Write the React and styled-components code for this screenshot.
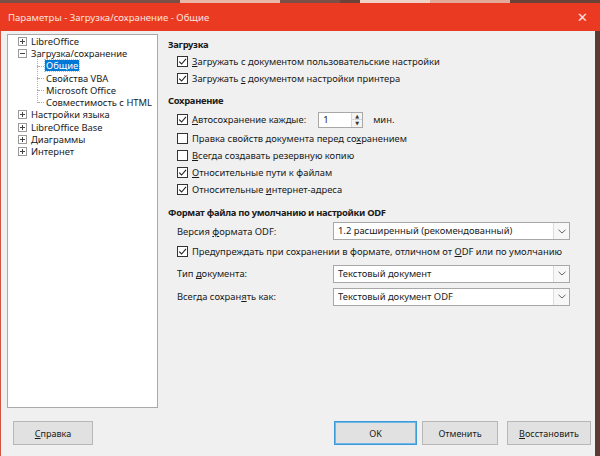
import React from "react";
import styled, { createGlobalStyle, css } from "styled-components";

const GlobalStyle = createGlobalStyle`
  html, body {
    margin: 0;
    padding: 0;
    background: #5b3b33;
  }
  body {
    font-family: "Noto Sans", "DejaVu Sans", sans-serif;
    font-size: 9.4px;
    color: #1a1a1a;
  }
`;

const Window = styled.div`
  display: flex;
  flex-flow: column;
  width: 600px;
  height: 456px;
  overflow: hidden;
`;

const TopStrip = styled.div`
  display: flex;
  height: 3px;
  background: #6a4238;

  span {
    display: block;
    height: 3px;
  }
  .a { width: 100px; background: #e8b7a8; }
  .b { width: 60px; background: #7a5046; }
  .c { width: 70px; background: #efd3c8; margin-left: 20px; }
  .d { width: 80px; background: #e3a999; }
`;

const TitleBar = styled.div`
  display: flex;
  align-items: center;
  justify-content: space-between;
  height: 28px;
  padding: 0 10px 0 8px;
  background: #ea3a22;
  color: #fde3dc;
  font-size: 9.6px;
`;

const Close = styled.span`
  font-size: 13px;
  color: #fde3dc;
  margin-right: 2px;
`;

const Body = styled.div`
  flex: 1;
  display: flex;
  flex-flow: column;
  background: #f0f0f0;
  border-left: 1px solid #d1553f;
  border-right: 5px solid #5b3b33;
`;

const Main = styled.div`
  display: flex;
  flex-flow: row;
  padding: 3px 0 0 6px;
`;

const TreePanel = styled.div`
  width: 149px;
  height: 372px;
  background: #fff;
  border: 1px solid #a9a9a9;
`;

const TreeRow = styled.div`
  position: relative;
  display: flex;
  align-items: center;
  height: 12.3px;
  padding-left: ${(p) => (p.$child ? 37 : 22)}px;
  white-space: nowrap;
`;

const Expander = styled.span`
  display: inline-flex;
  width: 7px;
  height: 7px;
  border: 1px solid #9a9a9a;
  margin-right: 3px;
  margin-left: -12px;
  position: relative;

  &::before {
    content: "";
    position: absolute;
    left: 1px;
    right: 1px;
    top: 3px;
    height: 1px;
    background: #444;
  }
  ${(p) =>
    p.$plus &&
    css`
      &::after {
        content: "";
        position: absolute;
        top: 1px;
        bottom: 1px;
        left: 3px;
        width: 1px;
        background: #444;
      }
    `}
`;

const Branch = styled.span`
  position: absolute;
  left: 29px;
  width: 6px;
  top: -6px;
  height: 12.3px;
  border-left: 1px dotted #b0b0b0;

  &::after {
    content: "";
    position: absolute;
    left: 0;
    top: 12px;
    width: 6px;
    border-top: 1px dotted #b0b0b0;
  }
`;

const TreeLabel = styled.span`
  padding: 0 1px;
  line-height: 11px;
  ${(p) =>
    p.$selected &&
    css`
      background: #0078d7;
      color: #fff;
      outline: 1px dotted #9cc9f0;
    `}
`;

const Content = styled.div`
  flex: 1;
  display: flex;
  flex-flow: column;
  padding: 3px 0 0 10px;
`;

const SectionTitle = styled.div`
  height: 16px;
  line-height: 16px;
  font-weight: bold;
  letter-spacing: -0.3px;
  margin-top: ${(p) => p.$gap || 0}px;
`;

const Row = styled.div`
  display: flex;
  align-items: center;
  height: ${(p) => p.$h || 17}px;
  padding-left: 9px;
  white-space: nowrap;
`;

const Box = styled.span`
  position: relative;
  width: 11px;
  height: 11px;
  border: 1px solid #333;
  background: #fff;
  margin-right: 4px;
  flex: none;
  box-sizing: border-box;
`;

const Check = styled.svg`
  position: absolute;
  left: 0;
  top: 0;
`;

const Label = styled.span`
  width: ${(p) => (p.$w ? `${p.$w}px` : "auto")};
  flex: none;
`;

const U = styled.span`
  text-decoration: underline;
  text-underline-offset: 1px;
`;

const Spin = styled.div`
  display: flex;
  width: 45px;
  height: 16px;
  margin: 0 10px 0 12px;
  border: 1px solid #a8a8a8;
  background: #fff;
  box-sizing: border-box;
`;

const SpinValue = styled.span`
  flex: 1;
  padding-left: 4px;
  line-height: 14px;
`;

const SpinButtons = styled.div`
  display: flex;
  flex-flow: column;
  width: 10px;
  border-left: 1px solid #d6d6d6;
  background: #f4f4f4;

  span {
    flex: 1;
    display: flex;
    align-items: center;
    justify-content: center;
    font-size: 5px;
    color: #333;
  }
  span + span {
    border-top: 1px solid #d6d6d6;
  }
`;

const Combo = styled.div`
  display: flex;
  width: 237px;
  height: 18px;
  border: 1px solid #a8a8a8;
  background: #fff;
  box-sizing: border-box;
`;

const ComboText = styled.span`
  flex: 1;
  padding-left: 4px;
  line-height: 16px;
`;

const ComboArrow = styled.span`
  width: 15px;
  display: flex;
  align-items: center;
  justify-content: center;
  border-left: 1px solid #dcdcdc;
  background: #f7f7f7;
`;

const Footer = styled.div`
  display: flex;
  align-items: center;
  padding: 13px 4px 0 12px;
`;

const Button = styled.button`
  width: ${(p) => p.$w || 80}px;
  height: 24px;
  margin-left: ${(p) => p.$ml || 0}px;
  font-family: "Noto Sans", sans-serif;
  font-size: 9px;
  color: #1a1a1a;
  background: #e1e1e1;
  border: 1px solid ${(p) => (p.$primary ? "#3c9ad8" : "#b7b7b7")};
  box-shadow: ${(p) => (p.$primary ? "inset 0 0 0 1px #6fb7e6" : "none")};
  padding: 0;
`;

const Spacer = styled.div`
  flex: 1;
`;

function Checkbox({ checked }) {
  return (
    <Box>
      {checked && (
        <Check width="9" height="9" viewBox="0 0 9 9">
          <path d="M1.2 4.6 L3.6 7 L8 1.8" fill="none" stroke="#222" strokeWidth="1.1" />
        </Check>
      )}
    </Box>
  );
}

function Chevron() {
  return (
    <svg width="8" height="5" viewBox="0 0 8 5">
      <path d="M0.5 0.8 L4 4 L7.5 0.8" fill="none" stroke="#666" strokeWidth="1" />
    </svg>
  );
}

const tree = [
  { label: "LibreOffice", plus: true },
  { label: "Загрузка/сохранение", minus: true },
  { label: "Общие", child: true, selected: true },
  { label: "Свойства VBA", child: true },
  { label: "Microsoft Office", child: true },
  { label: "Совместимость с HTML", child: true },
  { label: "Настройки языка", plus: true },
  { label: "LibreOffice Base", plus: true },
  { label: "Диаграммы", plus: true },
  { label: "Интернет", plus: true },
];

export default function App() {
  return (
    <>
      <GlobalStyle />
      <Window>
        <TopStrip>
          <span className="b" />
          <span className="b" />
          <span className="b" />
          <span className="a" />
          <span className="b" />
          <span className="c" />
          <span className="d" />
        </TopStrip>
        <TitleBar>
          <span>Параметры - Загрузка/сохранение - Общие</span>
          <Close>✕</Close>
        </TitleBar>
        <Body>
          <Main>
            <TreePanel>
              {tree.map((t) => (
                <TreeRow key={t.label} $child={t.child}>
                  {t.child && <Branch />}
                  {!t.child && <Expander $plus={t.plus} />}
                  <TreeLabel $selected={t.selected}>{t.label}</TreeLabel>
                </TreeRow>
              ))}
            </TreePanel>

            <Content>
              <SectionTitle>Загрузка</SectionTitle>
              <Row>
                <Checkbox checked />
                <Label><U>З</U>агружать с документом пользовательские настройки</Label>
              </Row>
              <Row>
                <Checkbox checked />
                <Label>Загружать <U>с</U> документом настройки принтера</Label>
              </Row>

              <SectionTitle $gap={6}>Сохранение</SectionTitle>
              <Row $h={21}>
                <Checkbox checked />
                <Label><U>А</U>втосохранение каждые:</Label>
                <Spin>
                  <SpinValue>1</SpinValue>
                  <SpinButtons>
                    <span>▲</span>
                    <span>▼</span>
                  </SpinButtons>
                </Spin>
                <Label>мин.</Label>
              </Row>
              <Row>
                <Checkbox />
                <Label>Правка свойств документа перед со<U>х</U>ранением</Label>
              </Row>
              <Row>
                <Checkbox />
                <Label><U>В</U>сегда создавать резервную копию</Label>
              </Row>
              <Row>
                <Checkbox checked />
                <Label><U>О</U>тносительные пути к файлам</Label>
              </Row>
              <Row>
                <Checkbox checked />
                <Label>Относительные <U>и</U>нтернет-адреса</Label>
              </Row>

              <SectionTitle $gap={7}>Формат файла по умолчанию и настройки ODF</SectionTitle>
              <Row $h={20}>
                <Label $w={156}>Версия <U>ф</U>ормата ODF:</Label>
                <Combo>
                  <ComboText>1.2 расширенный (рекомендованный)</ComboText>
                  <ComboArrow><Chevron /></ComboArrow>
                </Combo>
              </Row>
              <Row $h={21}>
                <Checkbox checked />
                <Label>Предупреждать при сохранении в формате, отличном от <U>О</U>DF или по умолчанию</Label>
              </Row>
              <Row $h={23}>
                <Label $w={156}>Тип <U>д</U>окумента:</Label>
                <Combo>
                  <ComboText>Текстовый документ</ComboText>
                  <ComboArrow><Chevron /></ComboArrow>
                </Combo>
              </Row>
              <Row $h={23}>
                <Label $w={156}>Всегда сохран<U>я</U>ть как:</Label>
                <Combo>
                  <ComboText>Текстовый документ ODF</ComboText>
                  <ComboArrow><Chevron /></ComboArrow>
                </Combo>
              </Row>
            </Content>
          </Main>

          <Footer>
            <Button $w={80}><U>С</U>правка</Button>
            <Spacer />
            <Button $w={83} $primary>OK</Button>
            <Button $w={76} $ml={5}>Отменить</Button>
            <Button $w={84} $ml={9}><U>В</U>осстановить</Button>
          </Footer>
        </Body>
      </Window>
    </>
  );
}
